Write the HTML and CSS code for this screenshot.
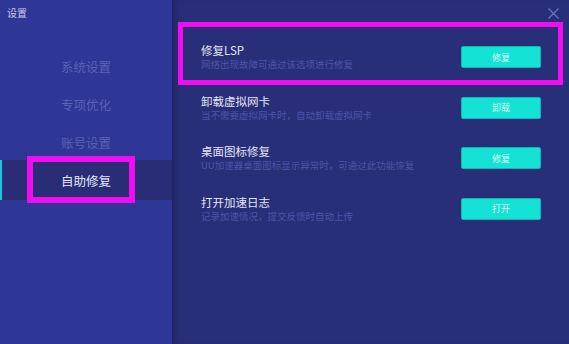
FILE: index.html
```html
<!DOCTYPE html>
<html lang="zh">
<head>
<meta charset="utf-8">
<link rel="stylesheet" href="styles.css">
</head>
<body>
<div class="window">
  <aside class="sidebar">
    <div class="title">设置</div>
    <ul class="nav">
      <li class="nav-item">系统设置</li>
      <li class="nav-item">专项优化</li>
      <li class="nav-item">账号设置</li>
      <li class="nav-item active">自助修复<span class="mark mark-nav"></span></li>
    </ul>
  </aside>
  <main class="main">
    <div class="close">
      <svg width="11" height="11" viewBox="0 0 11 11"><path d="M0.5 0.5L10.5 10.5M10.5 0.5L0.5 10.5" stroke="#6d74bf" stroke-width="1.2" fill="none"/></svg>
    </div>
    <div class="rows">
      <div class="row">
        <span class="mark mark-row"></span>
        <div class="text">
          <div class="row-title">修复LSP</div>
          <div class="row-desc">网络出现故障可通过该选项进行修复</div>
        </div>
        <button class="btn">修复</button>
      </div>
      <div class="row">
        <div class="text">
          <div class="row-title">卸载虚拟网卡</div>
          <div class="row-desc">当不需要虚拟网卡时，自动卸载虚拟网卡</div>
        </div>
        <button class="btn">卸载</button>
      </div>
      <div class="row">
        <div class="text">
          <div class="row-title">桌面图标修复</div>
          <div class="row-desc">UU加速器桌面图标显示异常时，可通过此功能恢复</div>
        </div>
        <button class="btn">修复</button>
      </div>
      <div class="row">
        <div class="text">
          <div class="row-title">打开加速日志</div>
          <div class="row-desc">记录加速情况，提交反馈时自动上传</div>
        </div>
        <button class="btn">打开</button>
      </div>
    </div>
  </main>
</div>
</body>
</html>
```

FILE: styles.css
```css
* { box-sizing: border-box; }
html, body {
  margin: 0;
  padding: 0;
  width: 569px;
  height: 344px;
  overflow: hidden;
  font-family: "Noto Sans CJK SC", "Noto Sans", sans-serif;
}
.window {
  display: flex;
  width: 569px;
  height: 344px;
}
.sidebar {
  width: 172px;
  background: #2e3696;
  display: flex;
  flex-direction: column;
}
.title {
  font-size: 10px;
  line-height: 12px;
  color: #c9cceb;
  padding: 7px 0 0 7px;
  height: 47px;
}
.nav {
  list-style: none;
  margin: 0;
  padding: 0;
}
.nav-item {
  position: relative;
  height: 38px;
  display: flex;
  align-items: center;
  justify-content: center;
  font-size: 12.5px;
  color: #5a62b6;
}
.nav-item.active {
  color: #e6e8f8;
  background: #282d76;
  height: 40px;
  margin-top: -1px;
  border-left: 2px solid #1cc6dc;
  padding-right: 2px;
}
.mark {
  position: absolute;
  border: 6px solid #f20cf2;
  pointer-events: none;
}
.mark-nav {
  left: 25px;
  top: -4px;
  width: 108px;
  height: 47px;
}
.main {
  flex: 1;
  background: #292e78;
  box-shadow: inset 6px 0 6px -4px rgba(20, 22, 70, 0.5);
  display: flex;
  flex-direction: column;
}
.close {
  display: flex;
  justify-content: flex-end;
  padding: 8px 10px 0 0;
  height: 32px;
}
.close svg { display: block; }
.rows {
  display: flex;
  flex-direction: column;
  padding: 0 28px 0 29px;
}
.row {
  position: relative;
  height: 50.5px;
  display: flex;
  align-items: center;
  justify-content: space-between;
}
.mark-row {
  left: -23px;
  right: -22px;
  top: -10px;
  bottom: -2px;
  border-width: 5.5px;
}
.text {
  display: flex;
  flex-direction: column;
  gap: 1px;
}
.row-title {
  font-size: 11.5px;
  line-height: 14px;
  color: #e4e6f7;
}
.row-desc {
  font-size: 9.5px;
  line-height: 13px;
  color: #4d55a8;
}
.btn {
  width: 80px;
  height: 22px;
  background: #14e2d4;
  border: 1px solid #0fb6b8;
  border-radius: 2px;
  color: #d9fbf8;
  font-family: inherit;
  font-size: 9px;
  padding: 0;
  margin-top: 0;
}
```
